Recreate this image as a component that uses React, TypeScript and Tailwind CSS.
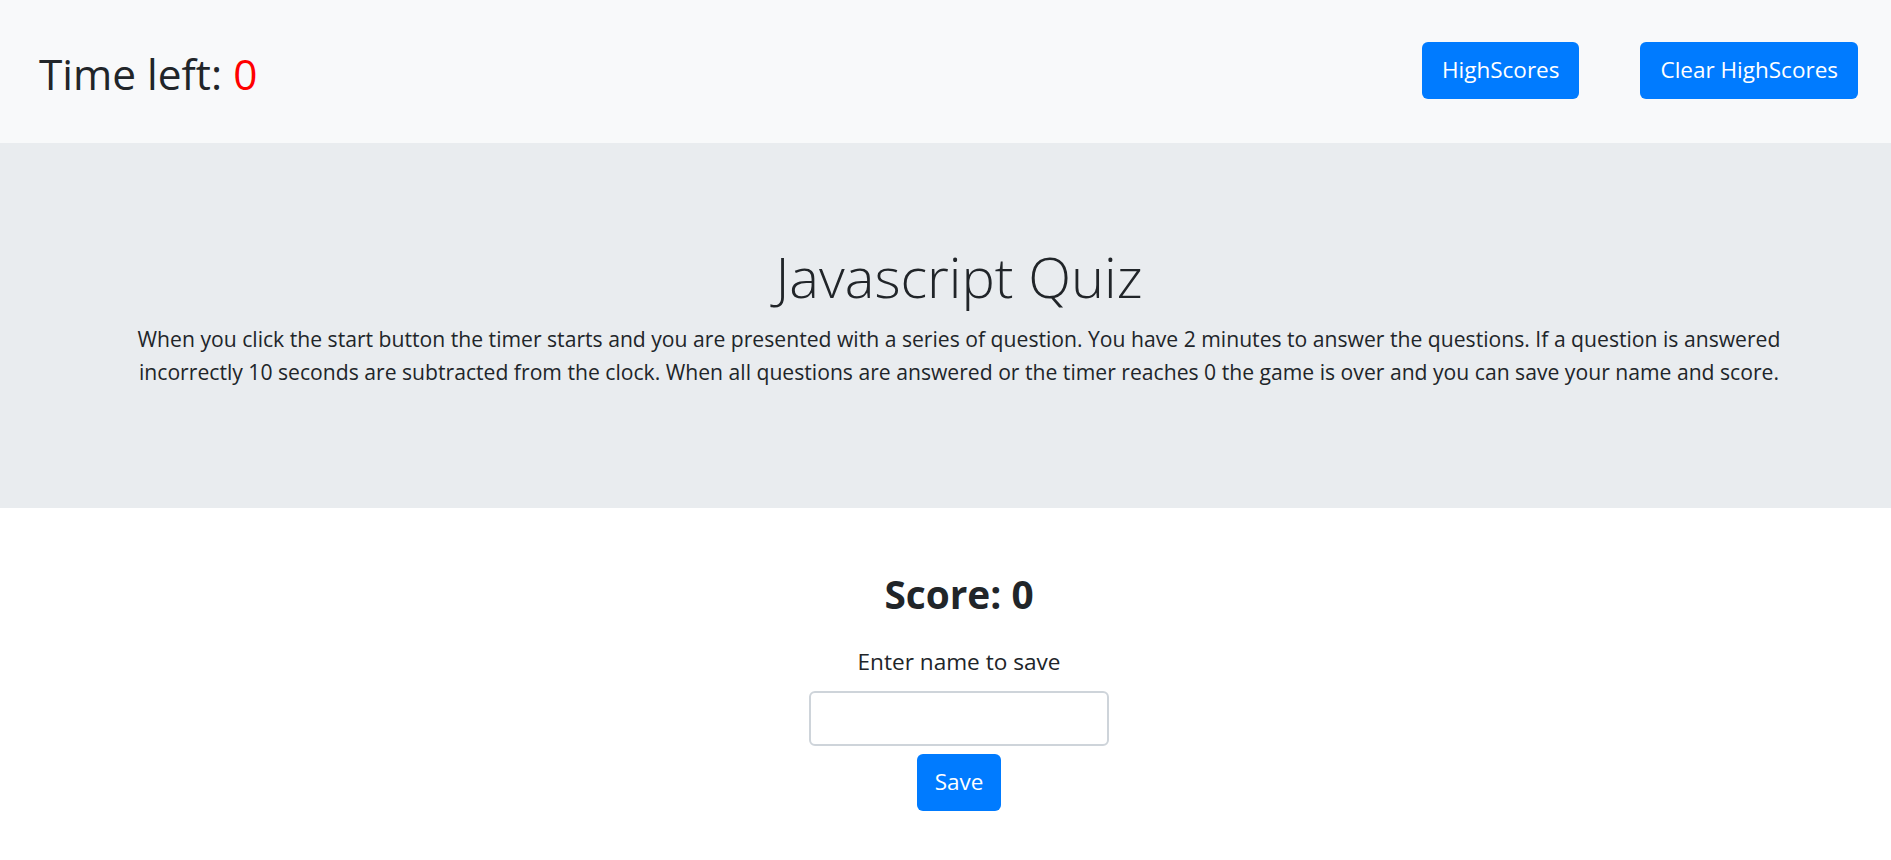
import { FC } from 'react';

const font = { fontFamily: '"Open Sans", "Noto Sans", sans-serif' };

const App: FC = () => {
  return (
    <div className="min-h-[860px] bg-white text-[#212529]" style={font}>
      {/* Top bar */}
      <nav className="flex h-[143px] items-center justify-between bg-[#f8f9fa] pl-[39px] pr-[33px]">
        <h1 className="mt-[5px] text-[42.4px] leading-[1.2] font-normal">
          Time left: <span className="text-[#ff0000]">0</span>
        </h1>
        <div className="mb-[3px] flex items-center gap-[61px]">
          <button className="h-[57px] rounded-[6px] bg-[#007bff] px-[20px] text-[22.5px] text-white">
            HighScores
          </button>
          <button className="h-[57px] rounded-[6px] bg-[#007bff] px-[20px] text-[22.5px] text-white">
            Clear HighScores
          </button>
        </div>
      </nav>

      {/* Intro */}
      <section className="flex h-[365px] flex-col items-center justify-center bg-[#e9ecef] pb-[20px] pl-[27px] text-center">
        <h2 className="mb-[12px] text-[56px] leading-[1.2] font-light">Javascript Quiz</h2>
        <p className="text-[21.15px] leading-[33px] whitespace-nowrap">
          When you click the start button the timer starts and you are presented with a series of question. You have 2
          minutes to answer the questions. If a question is answered
          <br />
          incorrectly 10 seconds are subtracted from the clock. When all questions are answered or the timer reaches 0
          the game is over and you can save your name and score.
        </p>
      </section>

      {/* Save score */}
      <section className="flex flex-col items-center pt-[63px] pl-[27px]">
        <h3 className="text-[38.8px] leading-[1.2] font-bold">Score: 0</h3>
        <p className="mt-[27px] text-[22.6px] leading-[33px]">Enter name to save</p>
        <input
          type="text"
          className="mt-[13px] h-[55px] w-[300px] rounded-[6px] border-2 border-[#ced4da] bg-white px-3 text-[22px] outline-none"
        />
        <button className="mt-[8px] h-[57px] rounded-[6px] bg-[#007bff] px-[18px] text-[22.5px] text-white">
          Save
        </button>
      </section>
    </div>
  );
};

export default App;
